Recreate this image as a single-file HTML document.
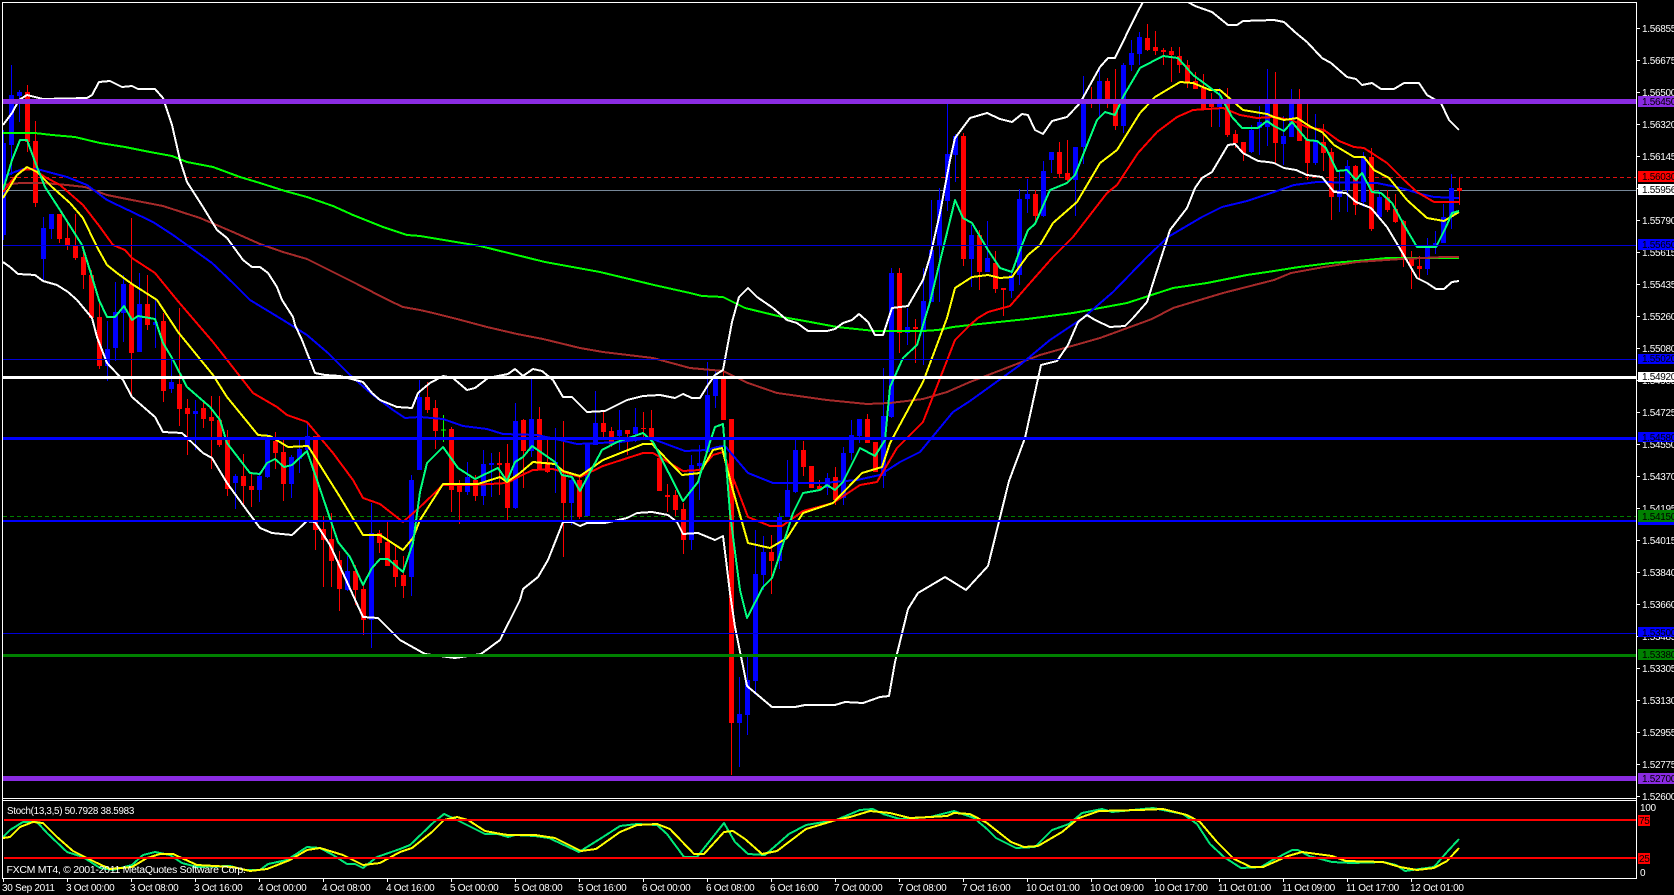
<!DOCTYPE html>
<html><head><meta charset="utf-8"><title>FXCM MT4 Chart</title>
<style>
html,body{margin:0;padding:0;background:#000;width:1674px;height:895px;overflow:hidden}
svg{display:block}
text{font-family:"Liberation Sans",sans-serif;font-size:10px;letter-spacing:-.3px;fill:#fff}
.k text,text.k{fill:#000}
.m{fill:none;stroke-width:2;shape-rendering:crispEdges;stroke-linejoin:round}
.c{fill:none;shape-rendering:crispEdges}
</style></head><body>
<svg width="1674" height="895" viewBox="0 0 1674 895" xmlns="http://www.w3.org/2000/svg">
<defs><clipPath id="cp"><rect x="3" y="3" width="1633" height="795"/></clipPath></defs>
<rect width="1674" height="895" fill="#000"/>
<g clip-path="url(#cp)">
<!-- under-candle lines -->
<path class="c" d="M3 177.5H1636" stroke="#e01010" stroke-dasharray="4 3"/>
<path class="c" d="M3 190.5H1636" stroke="#778899"/>
<path class="c" d="M3 516.5H1636" stroke="#008000" stroke-dasharray="4 3"/>
<!-- blue wicks -->
<path class="c" stroke="#00f" d="M3.5 130V240M11.5 65V175M19.5 90V122M43.5 217V280M51.5 214V239M107.5 321V381M115.5 282V361M123.5 275V342M139.5 273V352M155.5 300V348M171.5 360V393M195.5 400V450M235.5 474V509M259.5 472V502M267.5 434V478M291.5 455V498M299.5 438V473M307.5 424V452M347.5 556V591M371.5 503V648M411.5 475V596M419.5 380V470M467.5 462V495M483.5 450V505M491.5 453V497M515.5 403V509M531.5 379V457M555.5 428V493M571.5 475V525M587.5 444V516M595.5 391V445M619.5 410V450M635.5 408V442M691.5 455V550M699.5 445V500M707.5 362V452M715.5 370V408M739.5 677V767M747.5 657V735M755.5 530V695M763.5 536V590M779.5 513V569M787.5 460V517M795.5 440V493M827.5 473V495M843.5 447V505M851.5 420V460M859.5 419V443M883.5 368V488M891.5 268V418M907.5 308V345M923.5 268V365M931.5 200V302M939.5 188V302M947.5 104V211M955.5 134V182M971.5 225V287M987.5 221V272M1011.5 270V298M1019.5 189V285M1027.5 179V213M1043.5 161V217M1051.5 152V173M1075.5 147V216M1083.5 76V164M1099.5 70V117M1123.5 63V133M1131.5 40V71M1139.5 32V65M1219.5 88V127M1251.5 125V153M1259.5 106V155M1267.5 69V146M1283.5 116V165M1291.5 89V137M1315.5 114V165M1339.5 170V212M1347.5 160V212M1363.5 152V207M1379.5 190V218M1427.5 238V275M1435.5 231V254M1443.5 204V243M1451.5 174V229"/>
<!-- blue bodies -->
<path class="c" stroke="#00f" stroke-width="5" d="M3.5 143V235M11.5 95V145M19.5 92V96M43.5 228V259M51.5 214V229M107.5 349V366M115.5 312V348M123.5 284V313M139.5 304V352M155.5 322V325M171.5 382V389M195.5 411V414M235.5 476V483M259.5 476V490M267.5 438V477M291.5 457V484M299.5 449V459M307.5 436V450M347.5 571V590M371.5 533V620M411.5 480V577M419.5 397V470M467.5 477V492M483.5 464V496M491.5 463V465M515.5 421V508M531.5 419V451M555.5 462V464M571.5 480V503M587.5 444V516M595.5 423V445M619.5 430V436M635.5 427V434M691.5 465V540M699.5 463V466M707.5 395V452M715.5 378V396M739.5 714V723M747.5 680V715M755.5 574V681M763.5 552V575M779.5 517V561M787.5 490V517M795.5 450V492M827.5 478V488M843.5 453V498M851.5 435V453M859.5 419V436M883.5 416V476M891.5 273V417M907.5 327V333M923.5 301V330M931.5 250V302M939.5 200V246M947.5 154V201M955.5 136V155M971.5 235V259M987.5 258V272M1011.5 275V291M1019.5 199V275M1027.5 194V199M1043.5 171V216M1051.5 152V160M1075.5 147V180M1083.5 100V147M1099.5 81V100M1123.5 65V126M1131.5 53V65M1139.5 37V54M1219.5 104V107M1251.5 130V152M1259.5 122V128M1267.5 104V127M1283.5 136V144M1291.5 104V137M1315.5 140V163M1339.5 190V197M1347.5 166V190M1363.5 156V202M1379.5 197V217M1427.5 247V269M1435.5 243V247M1443.5 217V243M1451.5 188V217"/>
<!-- red wicks -->
<path class="c" stroke="#f00" d="M27.5 85V152M35.5 121V207M59.5 214V243M67.5 222V250M75.5 214V260M83.5 245V289M91.5 270V318M99.5 300V369M131.5 218V395M147.5 275V330M163.5 313V402M179.5 308V426M187.5 399V455M203.5 402V428M211.5 396V469M219.5 396V447M227.5 430V496M243.5 454V505M251.5 472V507M275.5 432V469M283.5 440V501M315.5 436V550M323.5 516V587M331.5 513V587M339.5 551V611M355.5 565V605M363.5 585V635M379.5 530V553M387.5 521V566M395.5 545V587M403.5 556V598M427.5 382V413M435.5 400V449M451.5 427V512M459.5 480V524M475.5 475V501M499.5 452V495M507.5 444V521M523.5 419V488M539.5 407V470M547.5 440V473M563.5 421V557M579.5 475V519M603.5 412V440M611.5 427V447M627.5 430V455M643.5 412V437M651.5 410V445M659.5 450V491M667.5 484V512M675.5 490V516M683.5 503V554M723.5 370V420M731.5 419V775M771.5 535V594M803.5 441V476M811.5 466V488M819.5 480V490M835.5 467V505M867.5 414V443M875.5 442V470M899.5 268V353M915.5 319V363M963.5 133V266M979.5 230V290M995.5 251V293M1003.5 288V316M1035.5 190V221M1059.5 142V178M1067.5 140V181M1091.5 87V108M1107.5 78V108M1115.5 69V130M1147.5 24V51M1155.5 31V55M1163.5 48V65M1171.5 47V82M1179.5 47V73M1187.5 60V88M1195.5 72V89M1203.5 74V109M1211.5 93V127M1227.5 88V137M1235.5 130V148M1243.5 142V161M1275.5 72V163M1299.5 89V141M1307.5 103V180M1323.5 124V171M1331.5 148V220M1355.5 165V215M1371.5 148V231M1387.5 190V212M1395.5 194V223M1403.5 220V267M1411.5 251V289M1419.5 256V279M1459.5 178V205"/>
<!-- red bodies -->
<path class="c" stroke="#f00" stroke-width="5" d="M27.5 92V142M35.5 141V203M59.5 214V239M67.5 238V246M75.5 246V258M83.5 257V275M91.5 275V318M99.5 317V366M131.5 284V353M147.5 304V325M163.5 321V391M179.5 384V409M187.5 408V414M203.5 408V419M211.5 417V421M219.5 420V445M227.5 440V489M243.5 476V486M251.5 486V490M275.5 441V453M283.5 452V484M315.5 436V530M323.5 529V540M331.5 539V561M339.5 560V589M355.5 571V590M363.5 589V620M379.5 533V543M387.5 542V566M395.5 560V577M403.5 575V586M427.5 397V410M435.5 408V431M451.5 429V490M459.5 484V492M475.5 480V496M499.5 463V465M507.5 463V508M523.5 420V451M539.5 419V470M547.5 462V472M563.5 475V503M579.5 480V517M603.5 423V432M611.5 431V444M627.5 430V434M643.5 428V429M651.5 428V437M659.5 458V491M667.5 495V497M675.5 495V510M683.5 509V540M723.5 378V420M731.5 419V723M771.5 552V561M803.5 450V467M811.5 466V488M819.5 486V489M835.5 477V500M867.5 419V443M875.5 442V472M899.5 273V333M915.5 327V329M963.5 136V259M979.5 235V272M995.5 263V289M1003.5 288V290M1035.5 194V216M1059.5 152V174M1067.5 173V180M1091.5 100V101M1107.5 81V100M1115.5 104V126M1147.5 38V50M1155.5 47V51M1163.5 50V52M1171.5 51V55M1179.5 56V65M1187.5 65V82M1195.5 81V89M1203.5 88V109M1211.5 104V107M1227.5 104V135M1235.5 134V143M1243.5 142V153M1275.5 104V143M1299.5 104V141M1307.5 140V163M1323.5 142V153M1331.5 152V197M1355.5 166V205M1371.5 157V229M1387.5 197V210M1395.5 209V222M1403.5 221V258M1411.5 258V266M1419.5 266V269M1459.5 188V191"/>
<path class="c" stroke="#0f0" d="M443.5 415V442M441 430H446"/>
<!-- moving averages -->
<polyline class="m" stroke="#0f0" points="3,133 35,133 52,135 75,137 100,143 125,147 150,152 172,156 187,162 213,167 240,177 260,183 285,191 307,197 333,206 353,215 383,227 407,235 420,236 480,246 545,262 600,272 654,285 690,293 702,296 723,297 745,308 782,317 805,321 837,327 875,331 923,331 938,330 953,327 970,325 1027,319 1073,313 1127,303 1173,288 1207,283 1247,275 1274,271 1299,267 1331,263 1357,261 1387,258 1459,258"/>
<polyline class="m" stroke="#a52a2a" points="3,185 20,183 43,183 67,185 85,187 107,195 132,200 163,206 200,218 233,232 260,244 283,252 307,259 333,272 357,284 388,300 403,307 420,310 433,313 457,319 487,327 517,334 543,339 580,348 603,352 653,358 690,368 723,371 748,383 777,393 827,400 867,404 890,403 923,399 947,392 970,382 1040,355 1100,338 1152,319 1173,308 1223,293 1274,280 1291,273 1324,267 1357,262 1401,259 1444,257 1459,257"/>
<polyline class="m" stroke="#00f" points="3,177 12,173 23,169 37,169 67,177 87,185 107,200 128,210 153,222 173,235 212,263 233,283 250,300 283,320 307,335 328,353 350,375 373,395 393,410 405,418 420,417 443,419 463,426 487,429 503,434 537,435 560,440 577,444 620,442 650,438 685,451 707,450 717,447 725,446 748,473 773,483 823,483 857,480 880,475 900,462 920,452 953,412 970,401 1020,365 1050,340 1083,318 1113,292 1147,257 1168,237 1202,217 1222,207 1247,201 1274,192 1294,185 1317,182 1377,183 1401,188 1421,194 1434,197 1459,198"/>
<polyline class="m" stroke="#f00" points="3,192 12,180 22,170 33,169 45,177 60,185 83,205 100,227 113,245 125,250 132,258 155,273 177,300 213,342 253,393 277,407 287,415 307,422 333,453 353,480 363,498 380,504 403,522 420,507 443,485 473,485 507,483 520,476 533,470 553,469 580,477 603,466 643,453 653,453 683,471 700,470 713,455 723,452 735,483 748,517 770,526 782,526 803,511 833,503 860,485 877,482 897,448 923,422 955,340 970,325 978,318 988,312 1010,306 1030,283 1053,257 1073,237 1107,193 1117,185 1138,153 1157,132 1177,117 1193,110 1223,108 1240,115 1257,118 1274,117 1291,120 1307,127 1324,130 1339,141 1354,147 1364,148 1387,163 1404,180 1417,192 1434,202 1459,202"/>
<polyline class="m" stroke="#ff0" points="3,198 17,175 27,167 37,172 52,187 70,203 83,218 97,247 107,265 117,273 132,284 157,300 178,332 213,375 227,397 258,435 270,436 288,447 308,446 340,497 363,535 380,535 403,550 413,538 420,520 443,484 478,484 500,477 507,482 520,473 533,462 555,464 563,471 580,476 603,460 643,444 652,444 682,475 700,473 713,450 722,448 732,487 748,543 770,548 787,538 803,513 833,503 862,473 882,467 890,443 923,382 947,318 955,288 972,277 988,275 1000,278 1012,277 1028,255 1040,245 1053,223 1077,202 1100,163 1117,150 1140,113 1155,97 1180,82 1193,83 1210,90 1220,90 1243,110 1267,114 1274,117 1284,120 1297,118 1311,127 1322,132 1334,145 1354,157 1364,157 1374,170 1389,178 1407,200 1427,218 1444,221 1459,212"/>
<polyline class="m" stroke="#00ff7f" points="3,190 12,160 20,140 27,140 37,167 45,187 60,210 82,245 92,277 99,300 107,317 115,317 124,306 132,320 138,316 155,319 163,343 172,358 187,387 210,407 220,420 227,443 250,473 260,474 267,463 275,459 284,467 292,465 307,451 317,480 338,542 350,557 363,585 372,568 380,559 388,559 403,572 413,543 420,492 427,463 443,447 458,468 475,479 498,468 507,481 515,462 523,457 532,446 555,462 562,475 572,477 580,491 602,450 617,442 643,433 653,442 683,501 698,482 710,442 715,427 723,424 730,513 736,560 740,590 747,618 763,587 772,578 778,560 793,513 803,493 820,490 827,485 835,490 843,482 860,448 875,456 885,440 890,387 903,358 917,345 930,302 955,200 963,218 972,223 988,250 1000,268 1012,272 1020,250 1028,230 1035,224 1050,190 1067,183 1075,175 1097,120 1105,112 1115,115 1123,97 1140,68 1163,56 1178,58 1193,75 1220,95 1232,117 1242,128 1258,128 1267,121 1274,126 1284,131 1292,122 1307,140 1317,141 1326,148 1337,171 1347,170 1356,180 1362,173 1372,192 1381,193 1392,203 1404,225 1417,247 1436,247 1446,227 1452,213 1459,211"/>
<!-- bollinger upper -->
<polyline class="m" stroke="#fff" points="3,125 12,113 19,100 27,95 43,99 87,98 92,95 99,82 110,81 122,87 132,86 138,89 155,89 163,98 172,125 180,160 187,182 203,207 217,230 227,238 243,260 252,267 260,267 268,273 277,287 282,300 293,317 295,325 302,340 315,373 325,375 340,376 363,382 372,393 380,400 397,407 412,408 418,393 430,383 443,376 453,378 467,390 475,388 488,378 508,374 515,369 523,376 533,369 542,371 553,380 563,397 572,397 587,412 605,411 627,400 643,396 660,395 675,398 683,394 692,398 700,398 708,385 715,375 723,370 732,322 739,297 748,288 757,297 773,308 787,320 797,323 808,331 827,331 835,329 843,323 852,320 859,314 868,322 875,335 883,335 892,308 908,306 923,280 930,257 940,213 950,160 955,138 970,118 987,113 1000,119 1012,122 1022,114 1028,115 1035,130 1043,134 1052,121 1067,117 1080,103 1100,67 1108,58 1115,58 1137,13 1143,2 1188,2 1195,6 1212,12 1228,25 1237,25 1243,21 1274,20 1284,22 1296,33 1307,42 1322,58 1331,63 1347,77 1356,79 1362,85 1372,83 1381,89 1394,89 1404,83 1419,83 1427,95 1441,103 1449,120 1459,130"/>
<!-- bollinger lower -->
<polyline class="m" stroke="#fff" points="3,262 10,267 18,274 35,275 43,281 57,285 68,292 77,300 92,318 97,337 107,363 123,380 132,397 155,417 163,432 182,433 203,453 212,458 227,483 243,505 260,528 272,533 292,535 307,521 315,522 330,545 347,582 363,617 378,618 400,640 425,654 455,658 481,654 500,640 520,600 523,589 538,577 548,560 563,522 572,522 580,526 587,523 605,523 627,518 637,513 652,512 668,515 677,522 683,534 698,533 715,540 723,536 726,560 730,593 735,627 747,686 772,707 795,707 805,705 835,705 845,702 863,703 880,697 889,696 895,662 908,609 918,593 945,577 966,590 988,566 1009,481 1025,438 1041,365 1057,361 1068,345 1078,322 1087,315 1095,320 1110,327 1125,326 1133,318 1147,302 1153,283 1170,230 1187,208 1195,188 1202,178 1212,172 1228,145 1235,144 1243,153 1258,161 1268,162 1274,163 1284,168 1296,170 1307,175 1322,177 1334,192 1346,193 1356,202 1371,208 1387,227 1399,247 1417,278 1427,283 1436,289 1444,289 1452,282 1459,281"/>
<!-- horizontal levels -->
<rect x="3" y="99" width="1633" height="5" fill="#8a2be2"/>
<rect x="3" y="245" width="1633" height="1" fill="#0000d8"/>
<rect x="3" y="359" width="1633" height="1" fill="#0000d8"/>
<rect x="3" y="376" width="1633" height="3" fill="#fff"/>
<rect x="3" y="437" width="1633" height="3" fill="#00f"/>
<rect x="3" y="520" width="1633" height="2" fill="#00f"/>
<rect x="3" y="633" width="1633" height="1" fill="#0000d8"/>
<rect x="3" y="654" width="1633" height="3" fill="#008000"/>
<rect x="3" y="776" width="1633" height="5" fill="#8a2be2"/>
</g>
<!-- stochastic -->
<polyline class="m" stroke="#00e676" points="3,837 10,830 23,822 37,822 47,833 67,852 83,857 100,868 113,870 132,865 143,855 155,852 170,855 182,863 197,867 230,866 245,870 260,870 268,864 287,860 307,847 320,848 333,855 347,864 355,864 363,868 377,857 400,849 410,845 434,822 444,814 457,820 485,834 498,834 508,837 515,835 535,836 549,838 579,852 603,837 620,826 637,824 657,825 667,834 684,857 697,857 724,823 735,842 748,854 765,855 789,834 806,825 836,820 860,810 873,809 883,814 900,819 930,817 954,811 974,818 987,829 996,838 1016,848 1035,847 1052,830 1069,824 1082,813 1102,809 1112,812 1153,808 1183,814 1197,824 1210,844 1224,857 1241,868 1261,867 1271,861 1292,850 1298,850 1309,856 1332,862 1352,863 1383,862 1396,865 1405,871 1434,867 1447,852 1459,839"/>
<polyline class="m" stroke="#ff0" points="3,838 10,837 20,827 33,822 43,823 57,837 73,851 97,863 110,869 132,867 147,858 160,854 173,854 197,865 233,867 250,871 267,869 290,860 307,850 320,848 343,855 363,865 380,863 400,852 412,848 432,832 444,820 457,817 468,820 485,831 501,834 508,835 535,835 555,838 581,851 596,849 620,832 637,825 657,824 670,829 694,854 704,854 724,832 733,831 745,839 762,854 777,851 806,829 836,820 850,817 870,811 890,813 910,818 930,817 947,816 954,813 970,814 987,823 1011,842 1024,847 1038,846 1062,832 1079,818 1099,811 1139,810 1163,809 1187,815 1200,822 1217,842 1234,859 1251,867 1263,867 1288,856 1302,852 1332,856 1346,861 1383,862 1400,867 1417,870 1434,868 1447,861 1459,848"/>
<rect x="4" y="819" width="1632" height="2" fill="#f00"/>
<rect x="4" y="857" width="1632" height="2" fill="#f00"/>
<!-- frames -->
<g fill="#fff">
<rect x="2" y="2" width="1635" height="1"/>
<rect x="2" y="2" width="1" height="877"/>
<rect x="1636" y="2" width="1" height="877"/>
<rect x="2" y="798" width="1635" height="1"/>
<rect x="2" y="800" width="1635" height="1"/>
<rect x="2" y="878" width="1635" height="1"/>
</g>
<text x="7" y="814" textLength="127" lengthAdjust="spacingAndGlyphs">Stoch(13,3,5) 50.7928 38.5983</text>
<text x="6.5" y="873" textLength="239" lengthAdjust="spacingAndGlyphs">FXCM MT4, © 2001-2011 MetaQuotes Software Corp.</text>
<!-- price ticks -->
<path class="c" stroke="#fff" d="M1637 28.5h3M1637 60.5h3M1637 92.5h3M1637 124.5h3M1637 156.5h3M1637 188.5h3M1637 220.5h3M1637 252.5h3M1637 284.5h3M1637 316.5h3M1637 348.5h3M1637 380.5h3M1637 412.5h3M1637 444.5h3M1637 476.5h3M1637 508.5h3M1637 540.5h3M1637 572.5h3M1637 604.5h3M1637 636.5h3M1637 668.5h3M1637 700.5h3M1637 732.5h3M1637 764.5h3M1637 796.5h3M3.5 879v3M67.5 879v3M131.5 879v3M195.5 879v3M259.5 879v3M323.5 879v3M387.5 879v3M451.5 879v3M515.5 879v3M579.5 879v3M643.5 879v3M707.5 879v3M771.5 879v3M835.5 879v3M899.5 879v3M963.5 879v3M1027.5 879v3M1091.5 879v3M1155.5 879v3M1219.5 879v3M1283.5 879v3M1347.5 879v3M1411.5 879v3"/>
<g>
<text x="1642" y="32">1.56855</text><text x="1642" y="64">1.56675</text><text x="1642" y="96">1.56500</text><text x="1642" y="128">1.56320</text><text x="1642" y="160">1.56145</text><text x="1642" y="192">1.55965</text><text x="1642" y="224">1.55790</text><text x="1642" y="256">1.55615</text><text x="1642" y="288">1.55435</text><text x="1642" y="320">1.55260</text><text x="1642" y="352">1.55080</text><text x="1642" y="384">1.54905</text><text x="1642" y="416">1.54725</text><text x="1642" y="448">1.54550</text><text x="1642" y="480">1.54370</text><text x="1642" y="512">1.54195</text><text x="1642" y="544">1.54015</text><text x="1642" y="576">1.53840</text><text x="1642" y="608">1.53660</text><text x="1642" y="640">1.53485</text><text x="1642" y="672">1.53305</text><text x="1642" y="704">1.53130</text><text x="1642" y="736">1.52955</text><text x="1642" y="768">1.52775</text><text x="1642" y="800">1.52600</text>
</g>
<!-- price boxes -->
<rect x="1638" y="96" width="36" height="11" fill="#8a2be2"/>
<rect x="1638" y="171" width="36" height="11" fill="#f00"/>
<rect x="1638" y="184" width="36" height="11" fill="#fff"/>
<rect x="1638" y="239" width="36" height="11" fill="#00f"/>
<rect x="1638" y="354" width="36" height="10" fill="#00f"/>
<rect x="1638" y="372" width="36" height="10" fill="#fff"/>
<rect x="1638" y="432" width="36" height="10" fill="#00f"/>
<rect x="1638" y="515" width="36" height="10" fill="#00f"/>
<rect x="1638" y="510" width="36" height="12" fill="#008000"/>
<rect x="1638" y="627" width="36" height="10" fill="#00f"/>
<rect x="1638" y="649" width="36" height="11" fill="#008000"/>
<rect x="1638" y="773" width="36" height="11" fill="#8a2be2"/>
<g class="k">
<text x="1642" y="105">1.56450</text><text x="1642" y="180">1.56030</text><text x="1642" y="193">1.55956</text><text x="1642" y="248">1.55650</text><text x="1642" y="362">1.55020</text><text x="1642" y="380">1.54920</text><text x="1642" y="441">1.54580</text><text x="1642" y="520">1.54150</text><text x="1642" y="636">1.53500</text><text x="1642" y="658">1.53380</text><text x="1642" y="782">1.52700</text>
</g>
<!-- stochastic axis -->
<text x="1640" y="811">100</text>
<rect x="1638" y="815" width="12" height="11" fill="#f00"/><text class="k" x="1639" y="824">75</text>
<rect x="1638" y="853" width="12" height="11" fill="#f00"/><text class="k" x="1639" y="862">25</text>
<text x="1640" y="876">0</text>
<!-- time axis -->
<g>
<text x="2" y="891">30 Sep 2011</text><text x="66" y="891">3 Oct 00:00</text><text x="130" y="891">3 Oct 08:00</text><text x="194" y="891">3 Oct 16:00</text><text x="258" y="891">4 Oct 00:00</text><text x="322" y="891">4 Oct 08:00</text><text x="386" y="891">4 Oct 16:00</text><text x="450" y="891">5 Oct 00:00</text><text x="514" y="891">5 Oct 08:00</text><text x="578" y="891">5 Oct 16:00</text><text x="642" y="891">6 Oct 00:00</text><text x="706" y="891">6 Oct 08:00</text><text x="770" y="891">6 Oct 16:00</text><text x="834" y="891">7 Oct 00:00</text><text x="898" y="891">7 Oct 08:00</text><text x="962" y="891">7 Oct 16:00</text><text x="1026" y="891">10 Oct 01:00</text><text x="1090" y="891">10 Oct 09:00</text><text x="1154" y="891">10 Oct 17:00</text><text x="1218" y="891">11 Oct 01:00</text><text x="1282" y="891">11 Oct 09:00</text><text x="1346" y="891">11 Oct 17:00</text><text x="1410" y="891">12 Oct 01:00</text>
</g>
</svg>
</body></html>
